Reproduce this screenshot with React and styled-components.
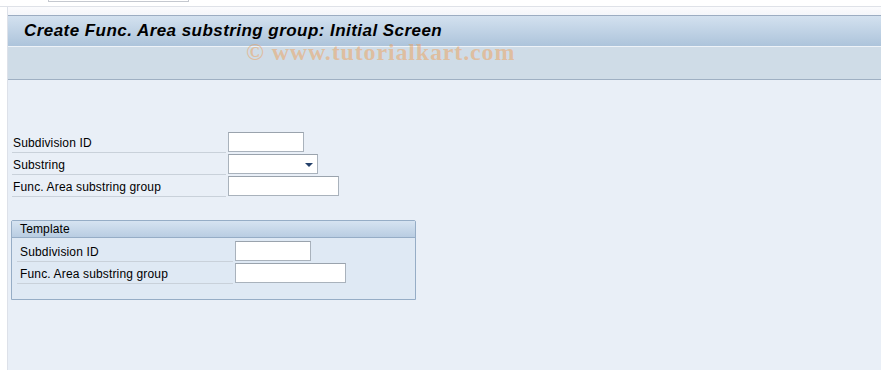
import React from 'react';
import styled, { createGlobalStyle } from 'styled-components';

const GlobalStyle = createGlobalStyle`
    html, body {
        margin: 0;
        padding: 0;
        background: #ffffff;
    }
    body {
        width: 881px;
        height: 370px;
        overflow: hidden;
        font-family: "Liberation Sans", Arial, sans-serif;
        font-size: 12px;
        color: #000;
    }
`;

const Page = styled.div`
    position: relative;
    display: flex;
    flex-direction: column;
    width: 881px;
    height: 370px;
`;

const TopStrip = styled.div`
    height: 6px;
    border-bottom: 1px solid #dfe2e8;
    background: #fff;
    display: flex;
`;

const CommandField = styled.div`
    margin-left: 48px;
    width: 139px;
    height: 1px;
    border: 1px solid #c4c8cf;
    border-top: none;
`;

const Body = styled.div`
    flex: 1;
    display: flex;
`;

const Gutter = styled.div`
    width: 7px;
    background: #fff;
    border-right: 1px solid #dde1e9;
`;

const Content = styled.div`
    flex: 1;
    display: flex;
    flex-direction: column;
    background: #e9eff7;
`;

const Spacer = styled.div`
    height: 8px;
    background: linear-gradient(#fbfbfd, #f4f6fa);
`;

const TitleBar = styled.div`
    height: 30px;
    border-top: 1px solid #9cadc2;
    border-bottom: 1px solid #eef3f8;
    background: linear-gradient(#d3e1ef, #adc4db);
    display: flex;
    align-items: center;
    padding-left: 16px;
`;

const Title = styled.h1`
    margin: 0;
    font-family: "Liberation Sans", Arial, sans-serif;
    font-size: 17px;
    font-weight: bold;
    font-style: italic;
    letter-spacing: 0.45px;
    color: #000;
    white-space: nowrap;
`;

const Toolbar = styled.div`
    height: 32px;
    background: #cfdce7;
    border-bottom: 1px solid #9fb0c3;
`;

const Main = styled.div`
    flex: 1;
    padding: 51px 0 0 4px;
    display: flex;
    flex-direction: column;
`;

const Row = styled.div`
    display: flex;
    align-items: flex-end;
    height: 22px;
`;

const Label = styled.div`
    width: ${p => p.$width}px;
    height: 21px;
    line-height: 23px;
    box-sizing: border-box;
    padding-left: ${p => p.$indent || 1}px;
    border-bottom: 1px solid #c9d1da;
    margin-right: 2px;
    letter-spacing: 0.15px;
    white-space: nowrap;
`;

const Input = styled.div`
    position: relative;
    box-sizing: border-box;
    width: ${p => p.$width}px;
    height: 20px;
    margin-bottom: 1px;
    background: #fff;
    border: 1px solid #a9b2bc;
    border-top-color: #9aa3ad;
`;

const Arrow = styled.span`
    position: absolute;
    right: 4px;
    top: 8px;
    width: 0;
    height: 0;
    border-left: 4px solid transparent;
    border-right: 4px solid transparent;
    border-top: 4px solid #24406a;
`;

const Group = styled.div`
    margin: 23px 0 0 -1px;
    width: 405px;
    box-sizing: border-box;
    border: 1px solid #96adc6;
    border-radius: 2px 2px 0 0;
    background: #dfe9f4;
`;

const GroupHeader = styled.div`
    height: 16px;
    line-height: 16px;
    padding-left: 8px;
    letter-spacing: 0.15px;
    background: linear-gradient(#d6e3f1, #b9cde2);
    border-bottom: 1px solid #96adc6;
`;

const GroupBody = styled.div`
    padding: 2px 0 15px 5px;
    display: flex;
    flex-direction: column;
`;

const Watermark = styled.div`
    position: absolute;
    left: 246px;
    top: 39px;
    font-family: "Liberation Serif", "Times New Roman", serif;
    font-size: 24px;
    font-weight: bold;
    letter-spacing: 0.85px;
    color: rgba(238, 160, 90, 0.5);
    white-space: nowrap;
    pointer-events: none;
`;

const FieldRow = ({ label, width, labelWidth, dropdown, indent }) => (
    <Row>
        <Label $width={labelWidth} $indent={indent}>{label}</Label>
        <Input $width={width}>{dropdown && <Arrow />}</Input>
    </Row>
);

const App = () => {
    return (
        <>
            <GlobalStyle />
            <Page>
                <TopStrip>
                    <CommandField />
                </TopStrip>
                <Body>
                    <Gutter />
                    <Content>
                        <Spacer />
                        <TitleBar>
                            <Title>Create Func. Area substring group: Initial Screen</Title>
                        </TitleBar>
                        <Toolbar />
                        <Main>
                            <FieldRow label="Subdivision ID" labelWidth={214} width={76} />
                            <FieldRow label="Substring" labelWidth={214} width={90} dropdown />
                            <FieldRow label="Func. Area substring group" labelWidth={214} width={111} />
                            <Group>
                                <GroupHeader>Template</GroupHeader>
                                <GroupBody>
                                    <FieldRow label="Subdivision ID" labelWidth={216} width={76} indent={3} />
                                    <FieldRow label="Func. Area substring group" labelWidth={216} width={111} indent={3} />
                                </GroupBody>
                            </Group>
                        </Main>
                    </Content>
                </Body>
                <Watermark>© www.tutorialkart.com</Watermark>
            </Page>
        </>
    );
};

export default App;
